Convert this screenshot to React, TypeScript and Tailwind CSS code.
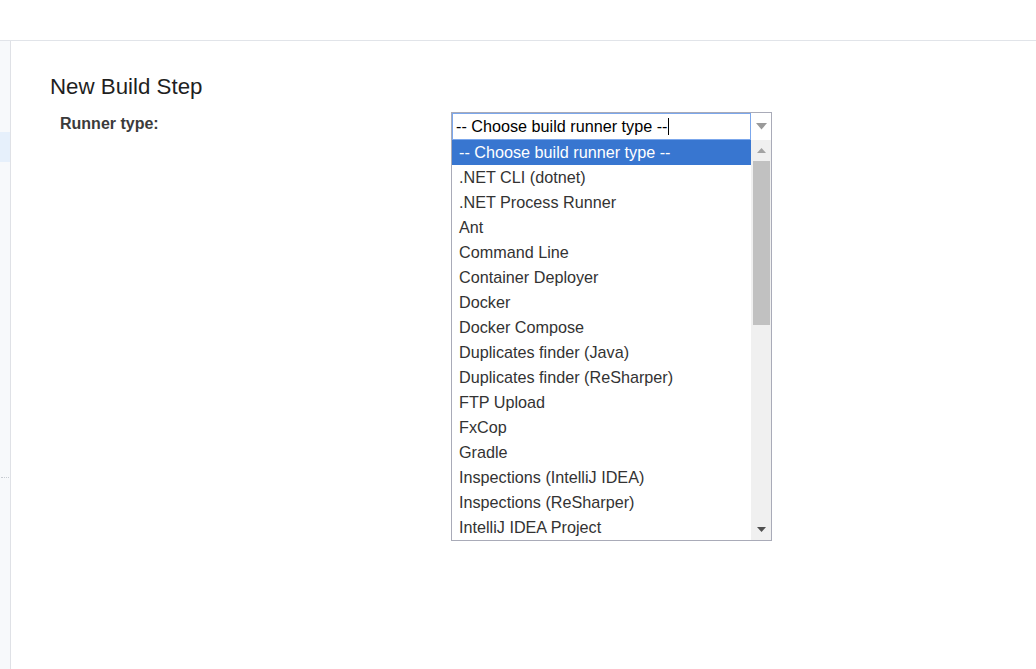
/* New Build Step — runner type dropdown open */
const runners = [
  '-- Choose build runner type --',
  '.NET CLI (dotnet)',
  '.NET Process Runner',
  'Ant',
  'Command Line',
  'Container Deployer',
  'Docker',
  'Docker Compose',
  'Duplicates finder (Java)',
  'Duplicates finder (ReSharper)',
  'FTP Upload',
  'FxCop',
  'Gradle',
  'Inspections (IntelliJ IDEA)',
  'Inspections (ReSharper)',
  'IntelliJ IDEA Project',
];

export default function App() {
  return (
    <div className="h-[669px] w-[1036px] overflow-hidden bg-white flex flex-col" style={{ fontFamily: '"Liberation Sans", Arial, sans-serif' }}>
      {/* header */}
      <div className="h-[41px] shrink-0 border-b border-[#e1e4e9]" />

      <div className="flex flex-1 min-h-0">
        {/* sidebar */}
        <div className="w-[11px] shrink-0 bg-[#f7f9fb] border-r border-[#dfe1e6] flex flex-col">
          <div className="h-[91px]" />
          <div className="h-[30px] bg-[#e6f0fb]" />
          <div className="h-[315px]" />
          <div className="border-t border-dotted border-[#c8ccd2] mx-px" />
        </div>

        {/* main */}
        <div className="flex-1 pl-[39px] pt-[32px]">
          <h1 className="text-[22.3px] leading-[28px] text-[#1f1f1f]">New Build Step</h1>
          <div className="flex mt-[11px]">
            <label className="w-[401px] pl-[10px] pt-[2px] text-[16px] leading-[19px] font-bold text-[#3b3b3b]">Runner type:</label>

            {/* select with open list */}
            <div className="w-[321px] border border-[#a9abb8] bg-white">
              <div className="flex h-[27px]">
                <div className="flex-1 border border-[#7ba7ec] flex items-center pl-[3px] text-[16.2px] text-black">
                  <span>-- Choose build runner type --</span>
                  <span className="w-px h-[17px] bg-black ml-px" />
                </div>
                <div className="w-[20px] flex items-center justify-center">
                  <svg width="11" height="7" viewBox="0 0 11 7"><path d="M0 0h11L5.5 6.5z" fill="#9a9a9a" /></svg>
                </div>
              </div>
              <div className="flex">
                <ul className="flex-1">
                  {runners.map((r, i) => (
                    <li
                      key={r}
                      className={
                        i === 0
                          ? 'h-[25px] leading-[25px] pl-[7px] text-[16.2px] bg-[#3876d0] text-white'
                          : 'h-[25px] leading-[25px] pl-[7px] text-[16.2px] text-[#333]'
                      }
                    >
                      {r}
                    </li>
                  ))}
                </ul>
                {/* scrollbar */}
                <div className="w-[20px] bg-[#f0f0f0] flex flex-col items-center">
                  <div className="h-[21px] flex items-center justify-center">
                    <svg width="9" height="5" viewBox="0 0 9 5"><path d="M4.5 0L9 5H0z" fill="#a3a3a3" /></svg>
                  </div>
                  <div className="w-[17px] h-[164px] bg-[#c1c1c1]" />
                  <div className="flex-1" />
                  <div className="h-[21px] flex items-center justify-center">
                    <svg width="9" height="5" viewBox="0 0 9 5"><path d="M0 0h9L4.5 5z" fill="#505050" /></svg>
                  </div>
                </div>
              </div>
            </div>
          </div>
        </div>
      </div>
    </div>
  );
}
